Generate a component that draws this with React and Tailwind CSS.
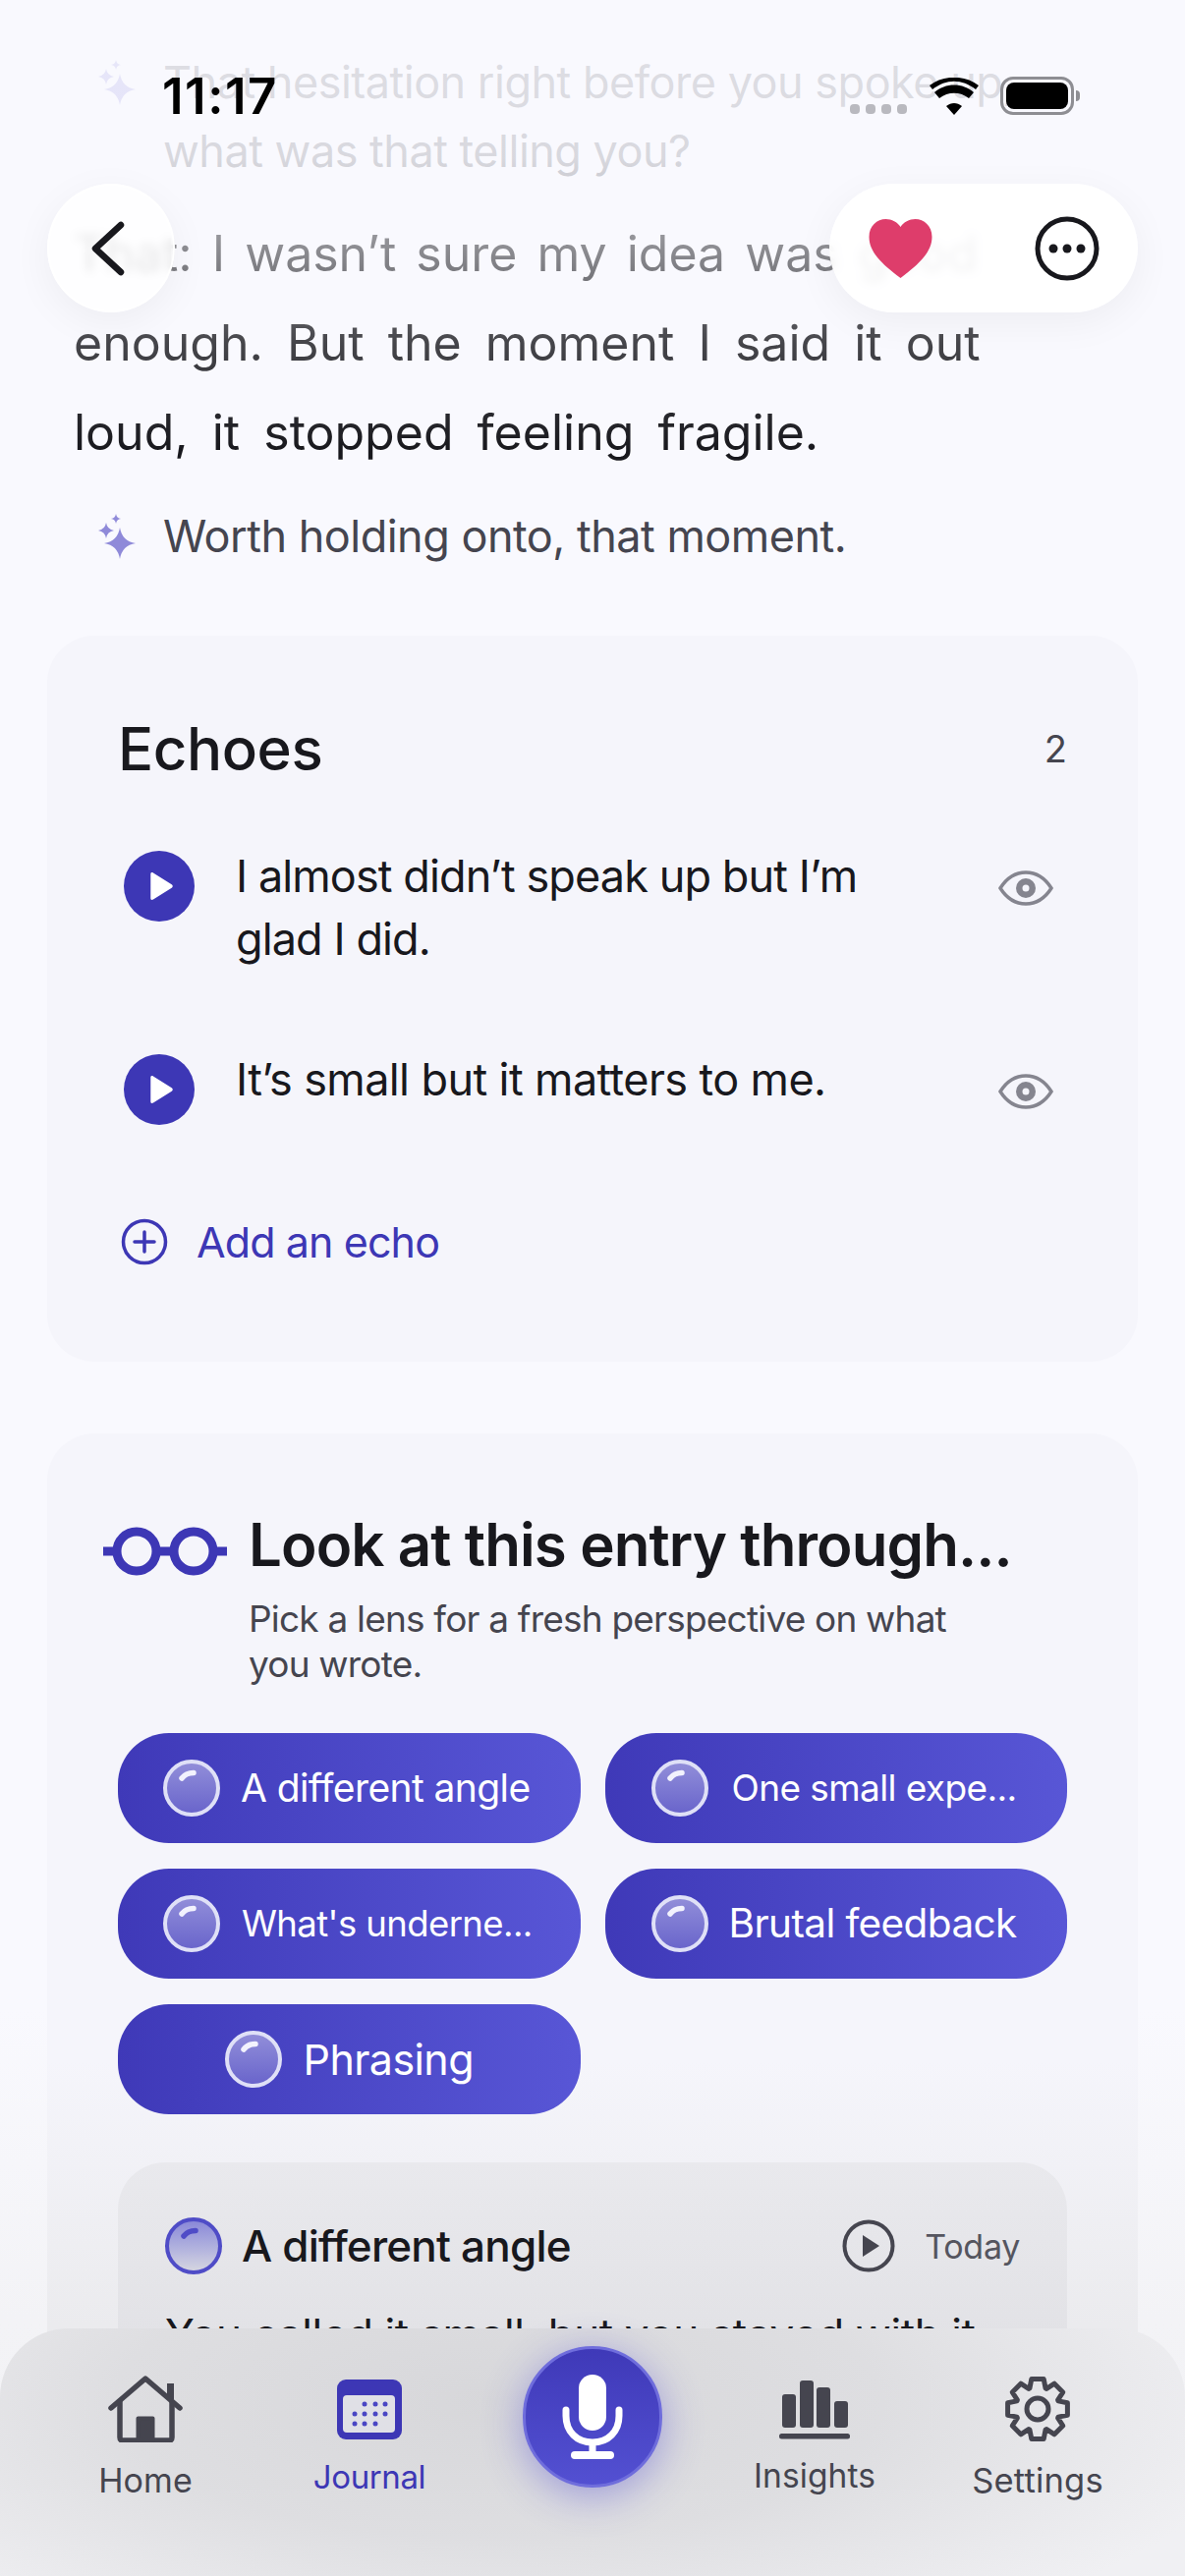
const font = { fontFamily: 'Inter, "Noto Sans", sans-serif' };

// four point star with concave sides
const star = (cx, cy, r) => {
  const k = r * 0.14;
  return `M${cx} ${cy - r}Q${cx + k} ${cy - k} ${cx + r} ${cy}Q${cx + k} ${cy + k} ${cx} ${cy + r}Q${cx - k} ${cy + k} ${cx - r} ${cy}Q${cx - k} ${cy - k} ${cx} ${cy - r}z`;
};

// gear outline, 8 teeth
const gearPath = () => {
  const pts = [];
  for (let i = 0; i < 8; i++) {
    const a = (i * Math.PI) / 4 - Math.PI / 2;
    const w = 0.2;
    [[a - 0.39 + 0.02, 22.5], [a - w, 31], [a + w, 31], [a + 0.39 - 0.02, 22.5]].forEach(([t, r]) => {
      pts.push(`${(36 + r * Math.cos(t)).toFixed(1)} ${(36 + r * Math.sin(t)).toFixed(1)}`);
    });
  }
  return `M${pts.join('L')}z`;
};

const Sparkle = ({ className }) => (
  <svg viewBox="0 0 40 60" className={className} fill="currentColor">
    <path d={star(24, 37, 16)} />
    <path d={star(10, 24, 8)} />
    <path d={star(20, 12, 5)} />
  </svg>
);

const PlayButton = () => (
  <div className="w-[72px] h-[72px] rounded-full bg-[#3d37b5] flex items-center justify-center shrink-0 mt-[-1px]">
    <svg viewBox="0 0 24 28" className="w-[26px] h-[30px] ml-[4px]" fill="white">
      <path d="M2 2.500c0-1.500 1-2 2.500-1.200l17.500 11c1.300.8 1.300 2.600 0 3.400l-17.500 11c-1.500.8-2.500.3-2.500-1.200z" />
    </svg>
  </div>
);

const Eye = () => (
  <svg viewBox="0 0 56 36" className="w-[56px] h-[36px] shrink-0" fill="none">
    <path d="M2 18C9 7 18 2 28 2s19 5 26 16c-7 11-16 16-26 16S9 29 2 18z" stroke="#85858f" strokeWidth="3.500" />
    <circle cx="28" cy="18" r="10" fill="#85858f" />
    <circle cx="28" cy="18" r="3.500" fill="#f5f5fb" />
  </svg>
);

const Orb = ({ light }) => (
  <div className={`relative w-[58px] h-[58px] rounded-full shrink-0 border-[4px] ${light ? 'border-[#dfe0f7] bg-gradient-to-b from-[#918dd9] to-[#6a65cb]' : 'border-[#4f4cc7] bg-gradient-to-b from-[#8a88d8] to-[#d5d5e0]'}`}>
    <svg viewBox="0 0 50 50" className="absolute inset-0 w-full h-full" fill="none">
      <path d="M15 15c3-4 7-5.500 12-5.500" stroke={light ? '#f2f2fd' : '#4f4cc7'} strokeWidth="5.500" strokeLinecap="round" />
    </svg>
  </div>
);

const Chip = ({ label, center, size, gap, pl }) => (
  <div className={`h-[112px] rounded-[52px] bg-gradient-to-r from-[#3f39b8] to-[#5856d6] flex items-center ${center ? 'justify-center' : ''} ${gap} ${pl} `}>
    <Orb light />
    <span className={`text-white tracking-[-0.6px] whitespace-nowrap ${size}`}>{label}</span>
  </div>
);

const NavItem = ({ label, active, labelClass, className, children }) => (
  <div className={`flex flex-col items-center w-[170px] shrink-0 ${className}`}>
    <div className="h-[68px] flex items-center justify-center">{children}</div>
    <span className={`leading-[40px] ${active ? 'text-[#3d37b5]' : 'text-[#45454f]'} ${labelClass}`}>{label}</span>
  </div>
);

export default function App() {
  return (
    <div className="relative w-[1206px] h-[2622px] overflow-hidden bg-[linear-gradient(to_bottom,#f9f9fe_78%,#f3f3f6_90%,#f1f1f4_100%)]" style={font}>
      {/* scrolled content */}
      <div className="flex flex-col pt-[49px] text-[#18181d]">
        <div className="flex pl-[98px] gap-[28px] text-[#55555f]">
          <Sparkle className="w-[40px] h-[60px] text-[#8d88e0] shrink-0 mt-[5px]" />
          <p className="text-[45px] leading-[70px] tracking-[-0.5px]">That hesitation right before you spoke up,<br />what was that telling you?</p>
        </div>
        <p className="mt-[24px] ml-[75px] w-[1080px] text-[50px] leading-[91px] [word-spacing:10px]">
          <span className="[word-spacing:6px]">That: I wasn’t sure my idea was good</span><br />enough. But the moment I said it out<br />loud, it stopped feeling fragile.
        </p>
        <div className="flex pl-[98px] gap-[28px] mt-[25px] text-[#45454f] items-center">
          <Sparkle className="w-[40px] h-[60px] text-[#8f8ad9] shrink-0" />
          <p className="text-[45px] leading-[70px] tracking-[-0.5px]">Worth holding onto, that moment.</p>
        </div>

        {/* echoes */}
        <section className="mt-[66px] mx-[48px] h-[739px] rounded-[48px] bg-[#f5f5fb] pt-[80px] px-[72px]">
          <div className="flex justify-between items-center h-[70px]">
            <h2 className="text-[60px] font-medium tracking-[-0.4px]">Echoes</h2>
            <span className="text-[38px] text-[#45454f]">2</span>
          </div>
          <div className="mt-[70px] flex items-start pl-[6px] h-[207px]">
            <PlayButton />
            <p className="ml-[42px] w-[680px] text-[45px] leading-[64px] tracking-[-0.9px] mt-[-7px]">I almost didn’t speak up but I’m glad I did.</p>
            <div className="ml-auto mr-[14px] mt-[19px]"><Eye /></div>
          </div>
          <div className="flex items-start pl-[6px] h-[120px]">
            <PlayButton />
            <p className="ml-[42px] w-[680px] text-[45px] leading-[64px] tracking-[-0.6px] mt-[-7px]">It’s small but it matters to me.</p>
            <div className="ml-auto mr-[14px] mt-[19px]"><Eye /></div>
          </div>
          <div className="mt-[38px] ml-[3px] flex items-center gap-[29px] text-[#3d37b5]">
            <svg viewBox="0 0 48 48" className="w-[48px] h-[48px]" fill="none" stroke="#3d37b5" strokeWidth="3.500" strokeLinecap="round">
              <circle cx="24" cy="24" r="21.500" />
              <path d="M24 14v20M14 24h20" />
            </svg>
            <span className="text-[43px] tracking-[-0.9px]">Add an echo</span>
          </div>
        </section>

        {/* lenses */}
        <section className="mt-[73px] mx-[48px] min-h-[1163px] rounded-t-[48px] bg-[linear-gradient(to_bottom,#f5f5fb_55%,#ebebee_78%)] px-[72px] pt-[78px]">
          <div className="flex items-start">
            <svg viewBox="0 0 128 52" className="w-[128px] h-[52px] ml-[-16px] mt-[16px] shrink-0" fill="none" stroke="#3d37b5" strokeWidth="9">
              <circle cx="35" cy="26" r="20" />
              <circle cx="93" cy="26" r="20" />
              <path d="M55 26h18M1 26h14M113 26h14" />
            </svg>
            <div className="ml-[21px]">
              <h2 className="text-[60px] leading-[70px] font-semibold tracking-[-0.9px] whitespace-nowrap">Look at this entry through...</h2>
              <p className="mt-[18px] w-[760px] text-[37px] leading-[46px] tracking-[-0.8px] text-[#45454f]">Pick a lens for a fresh perspective on what you wrote.</p>
            </div>
          </div>
          <div className="mt-[47px] grid grid-cols-2 gap-x-[25px] gap-y-[26px]">
            <Chip label="A different angle" size="text-[39px]" gap="gap-[21px]" pl="pl-[46px]" />
            <Chip label="One small expe..." size="text-[37px]" gap="gap-[24px]" pl="pl-[47px]" />
            <Chip label="What's underne..." size="text-[36.500px]" gap="gap-[22px]" pl="pl-[46px]" />
            <Chip label="Brutal feedback" size="text-[40.500px]" gap="gap-[21px]" pl="pl-[47px]" />
            <Chip label="Phrasing" center size="text-[43px]" gap="gap-[22px]" />
          </div>
          <div className="mt-[49px] rounded-[48px] bg-[linear-gradient(to_bottom,#e9e9ed,#dfdfe3)] px-[48px] pt-[52px] h-[260px]">
            <div className="flex items-center">
              <Orb />
              <span className="ml-[20px] text-[44px] font-medium tracking-[-0.8px]">A different angle</span>
              <svg viewBox="0 0 54 54" className="w-[54px] h-[54px] ml-auto" fill="none">
                <circle cx="27" cy="27" r="24.500" stroke="#45454f" strokeWidth="4" />
                <path d="M21 16l17 11-17 11z" fill="#45454f" />
              </svg>
              <span className="ml-[30px] text-[34px] text-[#55555f] tracking-[-0.3px]">Today</span>
            </div>
            <p className="mt-[29px] text-[44px] leading-[56px] tracking-[-0.4px] whitespace-nowrap">You called it small, but you stayed with it</p>
          </div>
        </section>
      </div>

      {/* fade under the status bar */}
      <div className="absolute inset-x-0 top-0 h-[460px] pointer-events-none bg-[linear-gradient(to_bottom,rgba(249,249,254,0.85)_0%,rgba(249,249,254,0.8)_35%,rgba(249,249,254,0.5)_56%,rgba(249,249,254,0.2)_76%,rgba(249,249,254,0)_100%)]" />

      {/* status bar */}
      <div className="absolute left-[165px] top-[68px] text-[51px] leading-[60px] font-semibold tracking-[1.5px] text-black">11:17</div>
      <div className="absolute left-[865px] top-[106px] flex gap-[6px]">
        {[0, 1, 2, 3].map((i) => <span key={i} className="w-[10px] h-[10px] rounded-[4px] bg-[#b9b9bf]" />)}
      </div>
      <svg viewBox="0 0 50 38" className="absolute left-[946px] top-[79px] w-[50px] h-[38px]">
        <path d="M25 38l-8-9c5-4 11-4 16 0z" />
        <path d="M10 21l-5-6c11-10 29-10 40 0l-5 6c-9-7-21-7-30 0z" />
        <path d="M3 12L0 8C14-3 36-3 50 8l-3 4C33 1 17 1 3 12z" />
      </svg>
      <div className="absolute left-[1018px] top-[78px] w-[75px] h-[39px] rounded-[13px] border-[3px] border-[#8e8e93] p-[3px]">
        <div className="w-full h-full rounded-[8px] bg-black" />
      </div>
      <div className="absolute left-[1095px] top-[92px] w-[4px] h-[11px] rounded-r-full bg-[#8e8e93]" />

      {/* floating buttons */}
      <button className="absolute left-[48px] top-[187px] w-[130px] h-[131px] rounded-full bg-white/80 border-[2px] border-white/90 backdrop-blur-[5px] shadow-[0_10px_40px_rgba(0,0,0,0.05)] flex items-center justify-center">
        <svg viewBox="0 0 34 56" className="w-[34px] h-[56px] -ml-[7px]" fill="none" stroke="#18181d" strokeWidth="6.500" strokeLinecap="round" strokeLinejoin="round">
          <path d="M30 4L4 28l26 24" />
        </svg>
      </button>
      <div className="absolute left-[844px] top-[187px] w-[314px] h-[131px] rounded-full bg-white/90 backdrop-blur-[5px] shadow-[0_10px_40px_rgba(0,0,0,0.05)]">
        <svg viewBox="0 0 64 60" className="absolute left-[40px] top-[36px] w-[65px] h-[60px]">
          <path d="M32 60C12 45 0 33 0 18 0 7 8 0 17 0c6 0 12 3 15 8 3-5 9-8 15-8 9 0 17 7 17 18 0 15-12 27-32 42z" fill="#de3d6b" />
        </svg>
        <svg viewBox="0 0 66 66" className="absolute left-[209px] top-[33px] w-[66px] h-[66px]" fill="none">
          <circle cx="33" cy="33" r="30" stroke="#18181d" strokeWidth="5" />
          <circle cx="19" cy="33" r="4.500" fill="#18181d" />
          <circle cx="33" cy="33" r="4.500" fill="#18181d" />
          <circle cx="47" cy="33" r="4.500" fill="#18181d" />
        </svg>
      </div>

      {/* tab bar */}
      <nav className="absolute inset-x-0 bottom-0 h-[252px] rounded-t-[70px] bg-[radial-gradient(ellipse_65%_110%_at_42%_30%,#d7d7da_0%,#dedee1_50%,#f0f0f3_100%)] flex pl-[63px] pt-[48px]">
        <NavItem label="Home" labelClass="mt-[19px] text-[34px] tracking-[0.1px]">
          <svg viewBox="0 0 76 68" className="w-[76px] h-[68px]" fill="none" stroke="#45454f" strokeWidth="5.500" strokeLinejoin="round" strokeLinecap="round">
            <path d="M63.500 8v16" strokeWidth="7" strokeLinecap="butt" />
            <path d="M3 33L38 3l35 30" />
            <path d="M12 27v36c0 2 1 3 3 3h47c2 0 3-1 3-3V27" />
            <path d="M30.500 66V43.500h15V66z" fill="#45454f" strokeWidth="4" />
          </svg>
        </NavItem>
        <NavItem label="Journal" active className="ml-[58px]" labelClass="mt-[15px] text-[33px] tracking-[-0.4px]">
          <svg viewBox="0 0 66 61" className="w-[66px] h-[61px]">
            <rect width="66" height="61" rx="9" fill="#3d37b5" />
            <rect x="6" y="16" width="53" height="38" rx="4" fill="#e0e0e6" />
            {[[28, 25], [39, 25], [49, 25], [18, 35], [28, 35], [39, 35], [49, 35], [18, 45], [28, 45], [39, 45]].map(([x, y]) => (
              <circle key={`${x}-${y}`} cx={x} cy={y} r="2.500" fill="#4a46c4" />
            ))}
          </svg>
        </NavItem>
        <div className="ml-[71px] w-[142px] h-[144px] mt-[-30px] rounded-full bg-gradient-to-b from-[#3f39b8] to-[#5350d2] border-[3px] border-[#6f6ddc] shadow-[0_8px_40px_rgba(80,76,210,0.45)] flex items-center justify-center shrink-0">
          <svg viewBox="0 0 62 86" className="w-[62px] h-[86px]" fill="none" stroke="white" strokeWidth="7" strokeLinecap="round">
            <rect x="17" y="0" width="28" height="57" rx="14" fill="white" stroke="none" />
            <path d="M4 36v6c0 16 11 27 27 27s27-11 27-27v-6" />
            <path d="M31 70v10" />
            <rect x="9" y="78" width="44" height="8" rx="4" fill="white" stroke="none" />
          </svg>
        </div>
        <NavItem label="Insights" className="ml-[70px]" labelClass="mt-[14px] text-[33.500px] tracking-[0.1px]">
          <svg viewBox="0 0 72 61" className="w-[72px] h-[61px]" fill="#45454f">
            <rect x="3" y="15" width="14" height="34" rx="3" />
            <rect x="21" y="1" width="14" height="48" rx="3" />
            <rect x="38" y="8" width="14" height="41" rx="3" />
            <rect x="56" y="22" width="14" height="27" rx="3" />
            <rect x="0" y="55" width="72" height="5.500" rx="2.500" />
          </svg>
        </NavItem>
        <NavItem label="Settings" className="ml-[57px]" labelClass="mt-[19px] text-[34.500px] tracking-[0.2px]">
          <svg viewBox="0 0 72 72" className="w-[72px] h-[72px]" fill="none" stroke="#45454f" strokeWidth="5" strokeLinecap="round" strokeLinejoin="round">
            <path d={gearPath()} />
            <circle cx="36" cy="36" r="11" />
          </svg>
        </NavItem>
      </nav>
    </div>
  );
}
